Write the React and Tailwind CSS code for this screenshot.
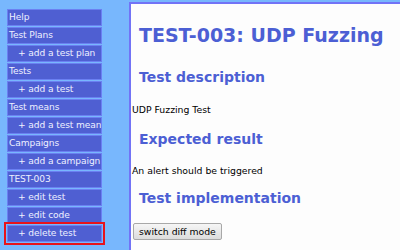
import React from 'react'

const menu = [
  { label: 'Help' },
  { label: 'Test Plans' },
  { label: '+ add a test plan', sub: true },
  { label: 'Tests' },
  { label: '+ add a test', sub: true },
  { label: 'Test means' },
  { label: '+ add a test mean', sub: true },
  { label: 'Campaigns' },
  { label: '+ add a campaign', sub: true },
  { label: 'TEST-003' },
  { label: '+ edit test', sub: true },
  { label: '+ edit code', sub: true },
  { label: '+ delete test', sub: true, marked: true },
]

function MenuItem({ label, sub, marked }) {
  return (
    <li
      className={
        'h-[17px] border border-[#6b80f2] bg-[#4f5fd2] text-[#eef0ff] leading-[15px] whitespace-nowrap overflow-hidden ' +
        (sub ? 'pl-[10px] ' : 'pl-[1px] ') +
        (marked ? 'outline-2 outline-offset-1 outline-[#e8131b]' : '')
      }
    >
      {label}
    </li>
  )
}

export default function App() {
  return (
    <div
      className="w-[400px] h-[250px] overflow-hidden bg-[#78b7fd] flex"
      style={{ fontFamily: '"DejaVu Sans", Verdana, sans-serif' }}
    >
      <ul className="ml-[7px] mt-[9px] w-[95px] shrink-0 flex flex-col gap-[1px] text-[9.1px] tracking-[-0.1px]">
        {menu.map((m) => (
          <MenuItem key={m.label} {...m} />
        ))}
      </ul>

      <main className="ml-[27px] mt-[2px] flex-1 bg-[#fdfdfd] border-l-2 border-t-2 border-[#7273f6] pl-[1px] text-[9.3px] text-black">
        <h1 className="pl-[7px] mt-[20px] text-[19px] font-bold text-[#4c5fd4] leading-[22px] whitespace-nowrap">
          TEST-003: UDP Fuzzing
        </h1>
        <h2 className="pl-[7px] mt-[22px] text-[14px] font-bold text-[#4c5fd4] leading-[18px]">
          Test description
        </h2>
        <p className="mt-[18px] leading-[12px]">UDP Fuzzing Test</p>
        <h2 className="pl-[7px] mt-[14px] text-[14px] font-bold text-[#4c5fd4] leading-[18px]">
          Expected result
        </h2>
        <p className="mt-[17px] leading-[12px]">An alert should be triggered</p>
        <h2 className="pl-[7px] mt-[12px] text-[14px] font-bold text-[#4c5fd4] leading-[18px]">
          Test implementation
        </h2>
        <button className="ml-[1px] mt-[16px] h-[17px] px-[5px] border border-[#a8a8a8] rounded-[2px] bg-gradient-to-b from-[#f6f6f6] to-[#dcdcdc] text-[9.3px] leading-[15px]">
          switch diff mode
        </button>
      </main>
    </div>
  )
}
